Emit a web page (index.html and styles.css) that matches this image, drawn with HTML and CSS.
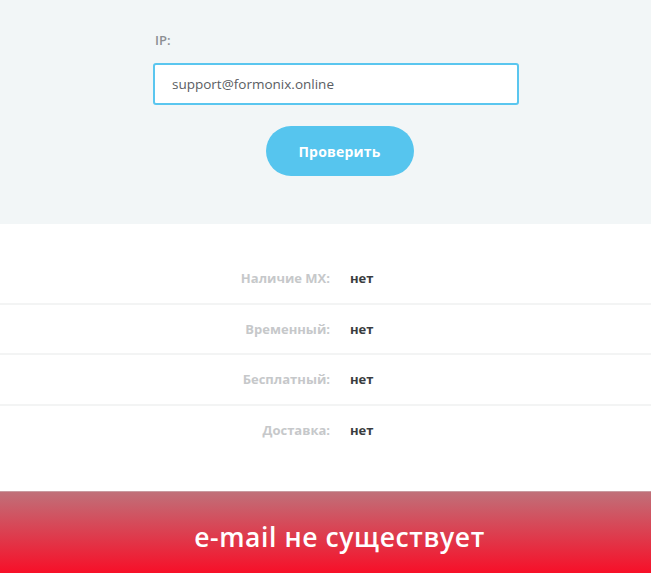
FILE: index.html
```html
<!DOCTYPE html>
<html lang="ru">
<head>
<meta charset="utf-8">
<title>Проверка e-mail</title>
<link rel="stylesheet" href="styles.css">
</head>
<body>
<section class="check">
  <div class="form">
    <label class="label" for="ip">IP:</label>
    <input class="field" id="ip" type="text" value="support@formonix.online">
    <div class="actions">
      <button class="btn" type="button">Проверить</button>
    </div>
  </div>
</section>
<section class="results">
  <div class="row"><span class="key">Наличие MX:</span><span class="val">нет</span></div>
  <div class="row"><span class="key">Временный:</span><span class="val">нет</span></div>
  <div class="row"><span class="key">Бесплатный:</span><span class="val">нет</span></div>
  <div class="row"><span class="key">Доставка:</span><span class="val">нет</span></div>
</section>
<section class="banner">e-mail не существует</section>
</body>
</html>
```

FILE: styles.css
```css
html, body {
  margin: 0;
  padding: 0;
  background: #ffffff;
  font-family: "Open Sans", "Noto Sans", sans-serif;
}
.check {
  background: #f2f6f7;
  height: 224px;
  box-sizing: border-box;
  padding-top: 31px;
}
.form {
  width: 366px;
  margin-left: 153px;
  display: flex;
  flex-direction: column;
}
.label {
  font-size: 13px;
  font-weight: 600;
  color: #8c8f93;
  line-height: 18px;
  margin-left: 2px;
  margin-bottom: 14px;
}
.field {
  box-sizing: border-box;
  width: 366px;
  height: 42px;
  border: 2px solid #5ac6ef;
  border-radius: 3px;
  background: #ffffff;
  padding: 0 0 0 17px;
  font-family: "Open Sans", "Noto Sans", sans-serif;
  font-size: 13.5px;
  color: #5a5d63;
  outline: none;
}
.actions {
  display: flex;
  justify-content: center;
  margin-top: 21px;
  padding-left: 7px;
}
.btn {
  width: 148px;
  height: 50px;
  border: none;
  border-radius: 25px;
  background: #56c5ee;
  color: #ffffff;
  font-family: "Open Sans", "Noto Sans", sans-serif;
  font-size: 14px;
  font-weight: 700;
  letter-spacing: 0.2px;
  cursor: pointer;
}
.results {
  padding-top: 30px;
  padding-bottom: 37px;
}
.row {
  display: grid;
  grid-template-columns: 330px 1fr;
  column-gap: 20px;
  align-items: center;
  height: 48.5px;
  border-bottom: 2px solid #f3f4f4;
  font-size: 13px;
  font-weight: 700;
}
.row:last-child {
  border-bottom: none;
}
.key {
  text-align: right;
  color: #c6c8ca;
}
.val {
  color: #3a3c40;
}
.banner {
  height: 82px;
  display: flex;
  align-items: center;
  justify-content: center;
  padding-top: 8px;
  padding-left: 28px;
  box-sizing: border-box;
  background: linear-gradient(to bottom, #c07079 0%, #f70f28 100%);
  border-top: 1px solid #c99aa0;
  color: #ffffff;
  font-size: 26.5px;
  font-weight: 600;
  letter-spacing: 0.6px;
}
```
